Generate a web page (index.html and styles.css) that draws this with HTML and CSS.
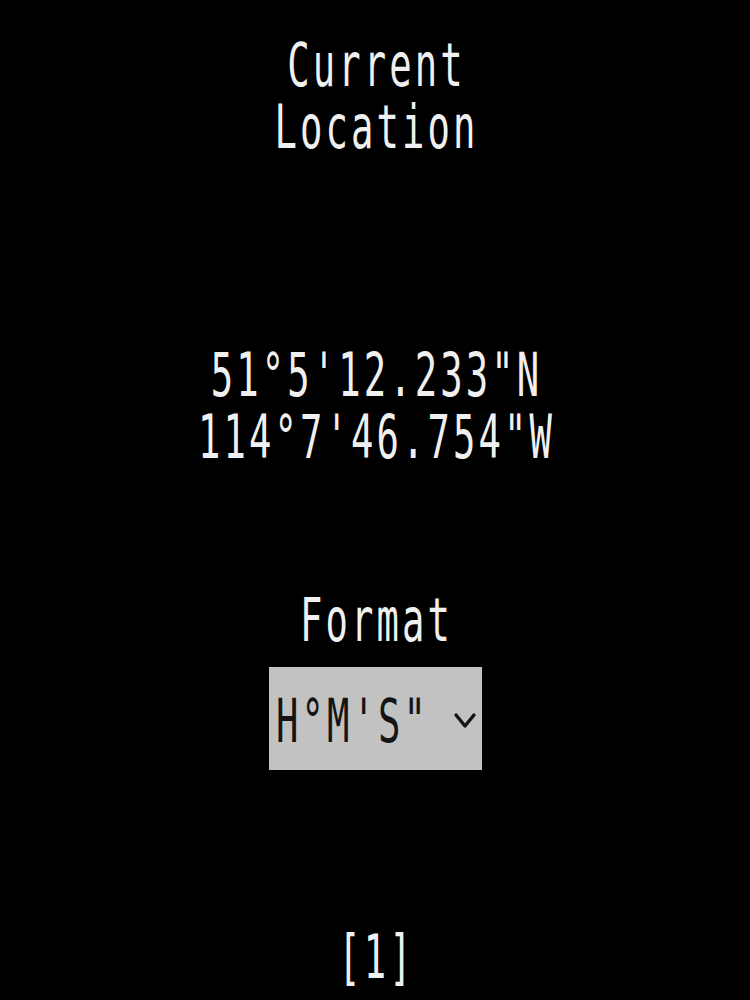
FILE: index.html
```html
<!DOCTYPE html>
<html lang="en">
  <head>
    <meta charset="UTF-8" />
    <meta name="viewport" content="width=device-width, initial-scale=1.0" />
    <title>Current Location</title>
    <link rel="stylesheet" href="styles.css">
  </head>
  <body>
    <div class="screen">
      <h1 class="title">Current<br />Location</h1>

      <div class="coords">
        <p>51°5'12.233"N</p>
        <p>114°7'46.754"W</p>
      </div>

      <p class="label">Format</p>
      <div class="picker">
        <span class="picker-value">H°M'S"</span>
        <svg class="chevron" width="24" height="20" viewBox="0 0 24 20">
          <polyline points="3,4 12,15 21,4" fill="none" stroke="#151515" stroke-width="3.4" stroke-linecap="round" stroke-linejoin="round" />
        </svg>
      </div>

      <p class="page">[1]</p>
    </div>
  </body>
</html>
```

FILE: styles.css
```css
* {
  margin: 0;
  padding: 0;
  box-sizing: border-box;
}

body {
  background: #000000;
  color: #f0f0f0;
  font-family: "DejaVu Sans Mono", "Liberation Mono", monospace;
}

.screen {
  width: 750px;
  height: 1000px;
  display: flex;
  flex-direction: column;
  align-items: center;
  overflow: hidden;
}

/* the display font is a thin narrow mono: squeeze glyphs, keep the cell */
.title,
.coords,
.label,
.page {
  width: 100%;
  text-align: center;
  font-size: 60px;
  line-height: 62px;
  font-weight: normal;
  letter-spacing: 5px;
  padding-left: 5px;
  transform: scaleX(0.62);
}

.title {
  margin-top: 34px;
}

.coords {
  margin-top: 186px;
}

.label {
  margin-top: 121px;
}

.picker {
  margin-top: 16px;
  width: 213px;
  height: 103px;
  background: #c2c2c2;
  display: flex;
  align-items: center;
  padding-left: 7px;
  padding-right: 5px;
}

.picker-value {
  flex: none;
  width: 150px;
  white-space: nowrap;
  color: #141414;
  font-size: 60px;
  line-height: 62px;
  letter-spacing: 5px;
  transform: scaleX(0.62);
  transform-origin: left center;
  margin-top: 4px;
}

.chevron {
  margin-left: auto;
  margin-top: 4px;
}

.page {
  margin-top: 156px;
}
```
